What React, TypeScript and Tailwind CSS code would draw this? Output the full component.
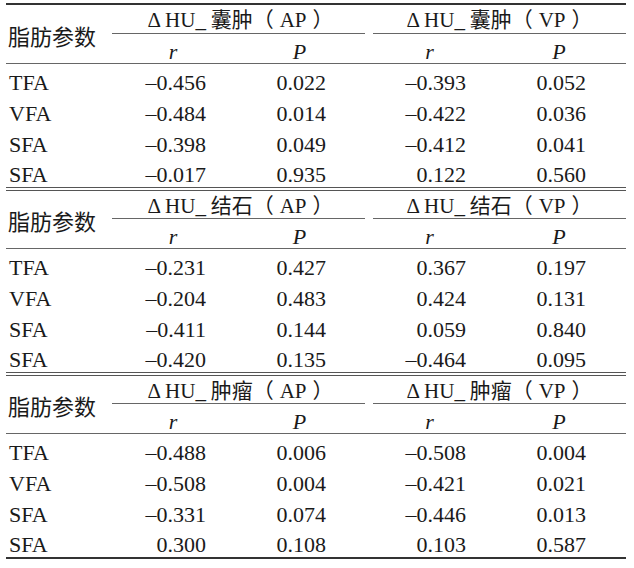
const serif = "font-['Liberation_Serif','Noto_Sans_CJK_SC',serif]";

type Row = [string, string, string, string, string];

interface Section {
  name: string;
  rows: Row[];
}

const sections: Section[] = [
  {
    name: "囊肿",
    rows: [
      ["TFA", "–0.456", "0.022", "–0.393", "0.052"],
      ["VFA", "–0.484", "0.014", "–0.422", "0.036"],
      ["SFA", "–0.398", "0.049", "–0.412", "0.041"],
      ["SFA", "–0.017", "0.935", "0.122", "0.560"],
    ],
  },
  {
    name: "结石",
    rows: [
      ["TFA", "–0.231", "0.427", "0.367", "0.197"],
      ["VFA", "–0.204", "0.483", "0.424", "0.131"],
      ["SFA", "–0.411", "0.144", "0.059", "0.840"],
      ["SFA", "–0.420", "0.135", "–0.464", "0.095"],
    ],
  },
  {
    name: "肿瘤",
    rows: [
      ["TFA", "–0.488", "0.006", "–0.508", "0.004"],
      ["VFA", "–0.508", "0.004", "–0.421", "0.021"],
      ["SFA", "–0.331", "0.074", "–0.446", "0.013"],
      ["SFA", "0.300", "0.108", "0.103", "0.587"],
    ],
  },
];

const grid = "grid grid-cols-[106px_126px_131px_127px_130px]";
// right padding per value column so numbers line up on the right
const valuePad = ["pr-[32px]", "pr-[43px]", "pr-[30px]", "pr-[40px]"];

function GroupTitle({ name, phase }: { name: string; phase: string }) {
  return (
    <span className="whitespace-nowrap">
      <span className="font-['Liberation_Serif',serif]">Δ HU_</span>
      <span className="font-['Noto_Sans_CJK_SC',sans-serif]"> {name}（</span>
      <span className="mx-[6px] font-['Liberation_Serif',serif]">{phase}</span>
      <span className="font-['Noto_Sans_CJK_SC',sans-serif]">）</span>
    </span>
  );
}

function TableSection({ section, first, last }: { section: Section; first: boolean; last: boolean }) {
  const headH = first ? "h-[29px]" : "h-[28px]";
  return (
    <div
      className={`${first ? "border-t-2 border-[#333]" : "border-t border-[#555]"} ${
        last ? "border-b-2 border-b-[#333]" : "border-b border-b-[#555]"
      }`}
    >
      <div className={grid}>
        {/* label spans both header rows */}
        <div className="row-span-2 flex items-center pl-[2px] pt-[2px] font-['Noto_Sans_CJK_SC',sans-serif] text-[22px] text-[#1a1a1a]">
          脂肪参数
        </div>
        <div className="col-span-2 pr-[4px]">
          <div className={`${headH} flex items-center justify-center border-b border-[#666] pt-[2px] pl-[4px] text-[21px] text-[#1a1a1a]`}>
            <GroupTitle name={section.name} phase="AP" />
          </div>
        </div>
        <div className="col-span-2 pl-[4px]">
          <div className={`${headH} flex items-center justify-center border-b border-[#666] pt-[2px] text-[21px] text-[#1a1a1a]`}>
            <GroupTitle name={section.name} phase="VP" />
          </div>
        </div>
        <div className="h-[29px] flex items-center justify-center pt-[5px] pr-[4px] italic text-[22px] text-[#1a1a1a]">r</div>
        <div className="h-[29px] flex items-center justify-center pt-[5px] pr-[8px] italic text-[22px] text-[#1a1a1a]">P</div>
        <div className="h-[29px] flex items-center justify-center pt-[5px] pr-[6px] italic text-[22px] text-[#1a1a1a]">r</div>
        <div className="h-[29px] flex items-center justify-center pt-[5px] pr-[4px] italic text-[22px] text-[#1a1a1a]">P</div>
      </div>
      <div className="border-t border-[#666]">
        {section.rows.map((row, i) => (
          <div key={i} className={`${grid} h-[30.75px] items-center pt-[2px] text-[22px] text-[#1a1a1a]`}>
            <div className="pl-[3px]">{row[0]}</div>
            {row.slice(1).map((v, j) => (
              <div key={j} className={`text-right ${valuePad[j]}`}>
                {v}
              </div>
            ))}
          </div>
        ))}
      </div>
    </div>
  );
}

export default function App() {
  return (
    <div className={`w-[634px] h-[568px] bg-white pt-[3px] pl-[6px] ${serif}`}>
      <div className="w-[620px]">
        {sections.map((s, i) => (
          <div key={s.name} className={i > 0 ? "mt-[2px]" : ""}>
            <TableSection section={s} first={i === 0} last={i === sections.length - 1} />
          </div>
        ))}
      </div>
    </div>
  );
}
